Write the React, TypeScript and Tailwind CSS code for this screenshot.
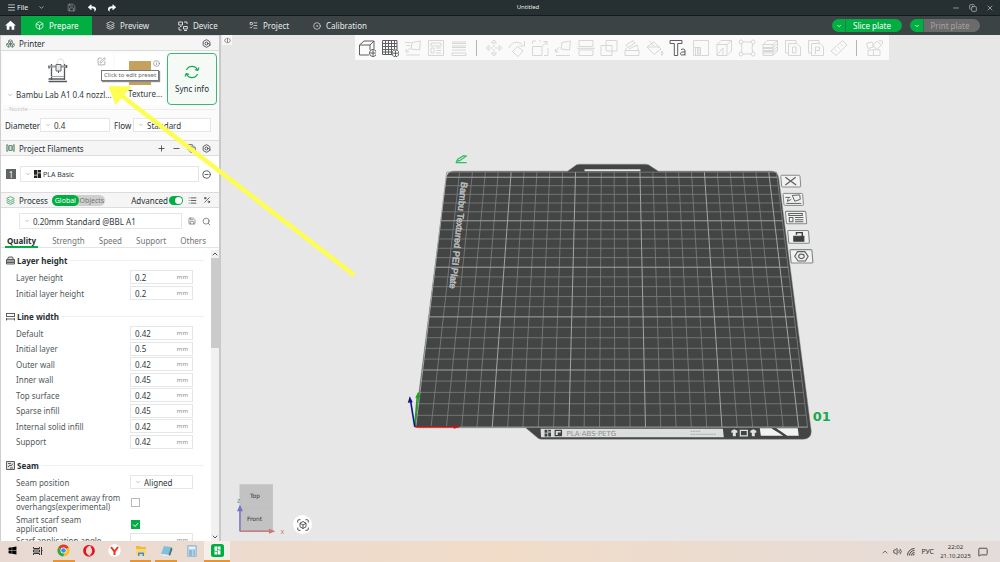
import React, { useState } from "react";
import {
  Bolt, Box, Boxes, ChevronDown, ChevronUp, CircleMinus, Copy, Info, Layers, List, Menu, MessageSquare,
  Minus, Plus, Save, Search, SquarePen, Volume2, X, ListTodo, CircleDot, Percent,
} from "lucide-react";
import { FaReply, FaShare, FaOpera, FaWindows } from "react-icons/fa";
import { MdHome } from "react-icons/md";

/* ---------- build plate projection ---------- */
const K = 0.00736;
const project = (u: number, t: number): [number, number] => {
  const d = 1 + K * t;
  return [610.5 + (415 + 15.33 * u - 610.5) / d, -1183 + 1610.3 / d];
};
const SIZE = 25.6;
const line = (a: [number, number], b: [number, number]) =>
  `M${a[0].toFixed(1)} ${a[1].toFixed(1)}L${b[0].toFixed(1)} ${b[1].toFixed(1)}`;
const steps = Array.from({ length: 26 }, (_, i) => i);
const gridPath = (bold: boolean) =>
  steps
    .filter((i) => (i % 5 === 0) === bold)
    .map((i) => line(project(i, 0), project(i, SIZE)) + line(project(0, i), project(SIZE, i)))
    .join("");

function PlateButton({ x, y, s, children }: { x: number; y: number; s: number; children: React.ReactNode }) {
  return (
    <g transform={`translate(${x} ${y}) scale(${s})`} stroke="#5f6262" fill="none" strokeWidth="1">
      <path d="M-9.5-6H8.5Q9.3-6 9.4-5L10.2 5Q10.3 6 9.4 6H-8.4Q-9.2 6-9.3 5L-10.2-5Q-10.3-6-9.5-6Z" fill="#f1f1f1" stroke="#858888" />
      {children}
    </g>
  );
}

function Scene() {
  return (
    <svg className="absolute inset-0 h-full w-full" viewBox="220 35 780 506" preserveAspectRatio="xMidYMid meet" fontFamily="'Noto Sans', sans-serif">
      {/* plate body */}
      <path
        d="M414 425L445.500 178Q446.500 171 453 171H567L576 164.500Q577 164 579 164H645Q647 164 648 164.500L658 171H771Q777.500 171 778.500 178L811 431Q811.500 439 803 439.500H541Q539 439.500 537.500 438.500L525 428H418Q414 428 414 425Z"
        fill="#434544" stroke="#8d8f8e" strokeWidth="0.500"
      />
      <path d="M584 169H640V171H584Z" fill="#e4e4e4" />
      <path d={gridPath(false) + line(project(0, SIZE), project(SIZE, SIZE)) + line(project(SIZE, 0), project(SIZE, SIZE))} stroke="#7e8180" strokeWidth="0.800" fill="none" />
      <path d={gridPath(true)} stroke="#a3a5a4" strokeWidth="1" fill="none" />
      <text transform="translate(460.500 181.500) rotate(96.300)" fontSize="9.200" fill="#bcbebd" stroke="#bcbebd" strokeWidth="0.500" fontFamily="'Liberation Sans', sans-serif">
        Bambu Textured PEI Plate
      </text>
      {/* front label strip */}
      <path d="M540 429H722.500L723.500 437.500H540.500Z" fill="#dcdddd" />
      <g fill="#3f4241">
        <path d="M544 430h2.800v3h-2.800zM547.600 430h2.800v1.800h-2.800zM544 433.800h2.800v3h-2.800zM547.600 432.600h2.800v4.200h-2.800z" />
        <path d="M554 430h7.500v6.500h-7.500zM555.200 431.200v4h2v-2.400h3v-1.600z" fillRule="evenodd" />
      </g>
      <text x="566" y="436" fontSize="7" fill="#8e9090" fontFamily="'DejaVu Sans', sans-serif">PLA·ABS·PETG</text>
      <path d="M690 431.500h10M690 434.500h26" stroke="#a0a2a2" strokeWidth="0.800" strokeDasharray="2 0.600" />
      <path d="M731 431l3-1.500 3 1.500v2h-1.500v3.500h-3V433H731zM750 431l3-1.500 3 1.500v2h-1.500v3.500h-3V433H750z" fill="#dfe0e0" />
      <path d="M740 430.500h7v5.500h-7z" fill="none" stroke="#dfe0e0" strokeWidth="1.200" />
      <path d="M759.500 428.500H771L783 436H760.500ZM776 428.500H797.500L798.500 436H787Z" fill="#f2f2f2" />
      {/* origin axes */}
      <path d="M414 427L416.500 397" stroke="#17a317" strokeWidth="1.600" />
      <path d="M417.500 392L420 398H414.500Z" fill="#17a317" />
      <path d="M414 427L410 402" stroke="#12128c" strokeWidth="1.600" />
      <path d="M409 396.500L412 402.500L407 403Z" fill="#12128c" />
      <path d="M414 427H455" stroke="#c01414" strokeWidth="1.600" />
      <path d="M453 425L460 427L453 429Z" fill="#c01414" />
      {/* rename mark and plate number */}
      <path d="M456 161L457 159L463 155.500L465.500 156L459 160.500ZM455 162.500H466" stroke="#2fbd66" strokeWidth="1.200" fill="none" />
      <text x="812.500" y="421" fontSize="13" fontWeight="bold" fill="#19a94b" fontFamily="'DejaVu Sans', sans-serif">01</text>
      {/* plate tools */}
      <PlateButton x={790.500} y={181} s={0.980}><path d="M-5.500-4L5.500 4M5-4L-5.500 4" strokeWidth="1.400" /></PlateButton>
      <PlateButton x={793} y={199.300} s={1}><path d="M-1-4L6.500-4.500 7 0 1.500 1.800ZM-8-2H-3M-7 4H8M-5-1L-6 2L-2 0" /></PlateButton>
      <PlateButton x={795.800} y={217.500} s={1.040}><path d="M-7-4H6V-2H-7ZM-6.500 0H-3V4H-6.500ZM-1 0H7M-1 2H7M-1 4H7" /></PlateButton>
      <PlateButton x={798.300} y={236.800} s={1.060}><path d="M-4.500-.5H5V4H-4.500Z" fill="#3c3e3e" stroke="#3c3e3e" /><path d="M-2-2V-4H3.500V0" stroke="#3c3e3e" strokeWidth="1.300" /></PlateButton>
      <PlateButton x={801.200} y={256.300} s={1.120}><path d="M-3.500-4.200H3L6 0L3.500 4.200H-3L-6 0Z" /><ellipse rx="2.500" ry="2" /></PlateButton>
      {/* view cube */}
      <path d="M238.500 484.500H272V532H238.500Z" fill="#c2c2c2" />
      <path d="M238.500 508H272" stroke="#bcbcbc" strokeWidth="0.500" />
      <text x="249" y="498.300" fontSize="6" fill="#333" fontFamily="'DejaVu Sans', sans-serif">Top</text>
      <text x="246" y="521.500" fontSize="6" fill="#333" fontFamily="'DejaVu Sans', sans-serif">Front</text>
      <path d="M239 531.500V510" stroke="#7a72c4" strokeWidth="1.500" />
      <path d="M239 505L242 511.500H236Z" fill="#7a72c4" />
      <path d="M239 531.500H270" stroke="#c87878" strokeWidth="1.500" />
      <path d="M274.500 531.500L268 529V534Z" fill="#c87878" />
      <text x="236" y="503" fontSize="7" fill="#5da08c">z</text>
      <text x="279.500" y="534" fontSize="7" fill="#d08080">x</text>
    </svg>
  );
}

/* ---------- canvas toolbar ---------- */
const tools: { label: string; d: string; dark?: boolean; gap?: boolean }[] = [
  { label: "Add", dark: true, d: "M1.500 6L6 2H16L12 6ZM1.500 6V16H11M12 6V11M16 2V10M15 11.200V16.800M12.200 14H17.800M15 10.500a3.500 3.500 0 1 0 .01 0" },
  { label: "Add plate", dark: true, d: "M1.500 1.500H16V11M1.500 1.500V15.500H11M1.500 4.500H16M1.500 7.500H16M1.500 10.500H12.500M1.500 13H11M4.500 1.500V15.500M7.500 1.500V15.500M10.500 1.500V15.500M13.500 1.500V10.500M14.500 11.500V17M11.500 14.200H17.500M14.500 10.800a3.500 3.500 0 1 0 .01 0" },
  { label: "Auto orient", d: "M8 3.500L16.500 2 15.500 11 7 10ZM1 3.500H7M2 6.500H6M6 9L2 13M2 10v3h3M2 16H16" },
  { label: "Arrange", d: "M1.500 1.500H16.500V16.500H1.500ZM4 4H14V7H4ZM4 9H7V14H4ZM9 9H14M9 11.500H14M9 14H14" },
  { label: "Layer height", d: "M2 3H16M2 4.500H16M2 7H16M2 8.500H16M2 11H16M2 14H16V16.500H2Z" },
  { label: "Move", gap: true, d: "M9 1L11.500 4H6.500ZM9 17L11.500 14H6.500ZM1 9L4 6.500V11.500ZM17 9L14 6.500V11.500ZM9 5.500V8M9 10V12.500M5.500 9H8M10 9H12.500" },
  { label: "Rotate", d: "M1 9A8 7 0 0 1 14 5M16.500 2V7H11.500M9.500 7.500L15 12 10 17.500 4.500 12.500Z" },
  { label: "Scale", d: "M1.500 7.500H11V16.500H1.500ZM1.500 5V2H5M8 2H10M17 9V16.500H13M11 7.500L16 2.500M12.500 2.500H16V6" },
  { label: "Lay flat", d: "M8 3.500L16.500 2 15.500 11 7 10ZM5 8L1.500 13M1.500 10v3h3M2 16.500H16" },
  { label: "Cut", d: "M2 1.500H16V7.500H2ZM2 11H16V16.500H2ZM0 9.300H18" },
  { label: "Boolean", d: "M1 6.500H12V16.500H1ZM6 1.500H17V12H6Z" },
  { label: "Supports", d: "M2 11.500H16V16.500H2ZM2 11.500L4 8.500M16 11.500L14.500 9M3 6L10 1.500 12 4 5 8.500ZM6 10L14 6L15 8.500" },
  { label: "Paint", d: "M3 1.500L8 7M1 8L8 3 15 10 8 15.500ZM1 8H14M16 12q-2 3 0 4.500q2-1.500 0-4.500" },
  { label: "Text", dark: true, d: "M1 1.500H13V4.500H8.700V16.500H5.300V4.500H1ZM12 10.500q4-1.500 4 1.500v4.500M16 13q-4.500-.5-4.500 1.700t4.500.8" },
  { label: "Seam", d: "M1.500 1.500H16.500V16.500H9M1.500 1.500V8M1.500 8.500H8.500V16.500H1.500ZM3.500 8.500V16.500M5.500 8.500V16.500M7 8.500V16.500" },
  { label: "Simplify", d: "M2 5.500L6 1.500H16.500L12 5.500ZM2 5.500V16.500H12V5.500M16.500 1.500V12L12 16.500M8 9V16M2 16L8 9" },
  { label: "Measure points", d: "M4.500 3H13.500M4.500 15H13.500M3 4.500Q5 9 3 13.500M15 4.500Q13 9 15 13.500M3 1a2 2 0 1 0 .01 0M15 1a2 2 0 1 0 .01 0M3 13a2 2 0 1 0 .01 0M15 13a2 2 0 1 0 .01 0" },
  { label: "Height range", d: "M2 5.500L6 1.500H16.500L12 5.500ZM2 5.500V16.500H12V5.500M16.500 1.500V12L12 16.500M2 8.500H12L16.500 4.500M2 11.500H12L16.500 7.500M2 14H12L16.500 10M2 9.500H12M2 12.500H12" },
  { label: "Outline", d: "M1.500 1.500H12V4M1.500 1.500V14H4M4.500 4.500H13L16.500 8V16.500H4.500ZM8.500 8H12V14H8.500Z" },
  { label: "Profile", d: "M1.500 1.500H12V4M1.500 1.500V14H4M4.500 4.500H13L16.500 8V16.500H4.500ZM8.500 15V8H12.500V11.500H8.500" },
  { label: "Measure", d: "M1 12L12.500 1.500 17 6 6 16.500ZM5 10.500L6.500 12M8 8L9.500 9.500M11 5.500L12.500 7" },
  { label: "Assembly", gap: true, d: "M1.500 4.500L7 3 8.500 8 3 9.500ZM12 2L16.500 6 12 10.500 8 6.500ZM3 11H8.500V16.500H3ZM8.500 10.500L15 11V16.500H8.500ZM14 1.500L17.500 2V5" },
];

function CanvasToolbar() {
  return (
    <div className="ml-[123px] flex h-[25px] w-fit items-center bg-[#fafafa] pr-1">
      {tools.map((t) => (
        <React.Fragment key={t.label}>
          {t.gap && (
            <span className="flex w-3 justify-center"><span className="h-4 w-px bg-[#b4b4b4]" /></span>
          )}
          <button aria-label={t.label} className="flex w-[23px] justify-center">
            <svg viewBox="0 0 18 18" className="size-[18px]" fill="none" stroke={t.dark ? "#5c5f5f" : "#d6d7d7"} strokeWidth="1"><path d={t.d} /></svg>
          </button>
        </React.Fragment>
      ))}
    </div>
  );
}

/* ---------- sidebar ---------- */
function Picker({ id, value, className = "", children }: { id: string; value: string; className?: string; children?: React.ReactNode }) {
  return (
    <span className={`flex min-w-0 items-center gap-[3px] bg-white pl-1 ${className}`}>
      <ChevronDown className="size-[6px] shrink-0 text-[#8c8c8c]" />
      {children}
      <select id={id} aria-label={id} className="min-w-0 flex-1 appearance-none overflow-hidden bg-transparent text-[#303a3c] outline-none">
        <option>{value}</option>
      </select>
    </span>
  );
}

function SectionBar({ icon, title, children }: { icon: React.ReactNode; title: string; children: React.ReactNode }) {
  return (
    <div className="flex h-4 items-center border-y border-[#dcdcdc] bg-[#f5f5f5] pr-2 pl-[5px]">
      <span className="flex w-[13px] text-[#5c7a68]">{icon}</span>
      <h2 className="text-[8px]">{title}</h2>
      {children}
    </div>
  );
}

function GroupTitle({ title, icon }: { title: string; icon: string }) {
  return (
    <div className="flex h-4 items-center gap-[2px] pr-[7px] pl-[5px]">
      <svg viewBox="0 0 9 9" className="size-[9px]" stroke="#4a4f50" fill="#dfe1e1" strokeWidth="0.900"><path d={icon} /></svg>
      <h3 className="text-[8px] font-bold">{title}</h3>
      <span className="h-px flex-1 bg-[#f0f0f0]" />
    </div>
  );
}

function NumberRow({ label, value }: { label: string; value: string }) {
  const [v, setV] = useState(value);
  const id = "p-" + label.toLowerCase().replace(/ /g, "-");
  return (
    <div className="flex h-[14px] items-center pr-[18px] pl-[15px]">
      <label htmlFor={id} className="flex-1">{label}</label>
      <span className="flex h-[14px] w-[63px] items-center border border-[#e6e6e6] bg-white pr-1 pl-1">
        <input id={id} value={v} onChange={(e) => setV(e.target.value)} className="w-0 flex-1 bg-transparent text-[#303a3c] outline-none" />
        <span className="pt-px text-[6px] text-[#8a8a8a]">mm</span>
      </span>
    </div>
  );
}

function CheckRow({ id, first, second, on }: { id: string; first: string; second: string; on: boolean }) {
  const [checked, setChecked] = useState(on);
  return (
    <div className="mt-1 flex h-[18px] items-center pl-[15px]">
      <label htmlFor={id} className="w-[115px] leading-[9px]">{first}<br />{second}</label>
      <span className="grid place-items-center">
        <input id={id} type="checkbox" checked={checked} onChange={(e) => setChecked(e.target.checked)}
          className="size-[9px] appearance-none border border-[#b9b9b9] bg-white [grid-area:1/1] checked:border-[#00ae42] checked:bg-[#00ae42]" />
        {checked && (
          <svg viewBox="0 0 9 9" className="pointer-events-none size-[9px] [grid-area:1/1]" stroke="#fff" fill="none"><path d="M2 4.500L4 6.500L7.200 3" /></svg>
        )}
      </span>
    </div>
  );
}

const widths: [string, string][] = [
  ["Default", "0.42"], ["Initial layer", "0.5"], ["Outer wall", "0.42"], ["Inner wall", "0.45"],
  ["Top surface", "0.42"], ["Sparse infill", "0.45"], ["Internal solid infill", "0.42"], ["Support", "0.42"],
];

function PrinterPicture() {
  return (
    <svg viewBox="0 0 22 26" className="h-[26px] w-[22px]" fill="none" stroke="#55595a">
      <path d="M10 7Q10 1 13.500 1T17 6" stroke="#c5c8c8" strokeWidth="0.700" />
      <path d="M4.500 6V22M17.500 6V22" strokeWidth="1.300" />
      <path d="M3 8.500H19" stroke="#9a9e9e" strokeWidth="2" />
      <path d="M9 6.500H14V13H9Z" fill="#e5e7e7" stroke="#6a6e70" />
      <path d="M11.500 13V15" />
      <path d="M4 18.500H17" stroke="#a5a9aa" />
      <path d="M1.500 21H18M1.500 23.500H20" strokeWidth="1.500" />
      <path d="M2 7.500v3M19.500 7v3" strokeWidth="1.500" />
    </svg>
  );
}

function Sidebar() {
  const [advanced, setAdvanced] = useState(true);
  return (
    <aside className="flex w-[221px] shrink-0 flex-col overflow-hidden border-r-2 border-l border-r-[#c9c9c9] border-l-[#cfcfcf] bg-white">
      <SectionBar title="Printer" icon={<Boxes className="size-[9px]" />}>
        <button aria-label="Printer settings" className="ml-auto"><Bolt className="size-[9px]" /></button>
      </SectionBar>
      <div className="flex flex-col bg-[#fbfbfb] px-[2px] pt-[2px]">
        <div className="flex h-[52px] gap-[2px]">
          <div className="relative flex w-[110px] flex-col items-center justify-between bg-white pt-[5px] pb-[5px]">
            <PrinterPicture />
            <Picker id="Printer preset" value="Bambu Lab A1 0.4 nozzl..." className="w-full" />
            <button aria-label="Edit preset" className="absolute top-1 right-[7px] text-[#777]"><SquarePen className="size-[9px]" strokeWidth={1.500} /></button>
            <div role="tooltip" className="absolute top-[17px] left-[98px] z-10 flex h-[11px] items-center border border-[#777] bg-white px-[2px] text-[6px] whitespace-nowrap text-[#666] shadow-[1px_1px_1px_#888]">
              Click to edit preset
            </div>
          </div>
          <div className="relative flex w-[50px] flex-col items-center justify-between bg-white pt-2 pb-[6px]">
            <span className="h-6 w-[22px] bg-[#c6a05f]" />
            <Picker id="Plate type" value="Texture..." className="w-full" />
            <Info className="absolute top-[7px] right-[5px] size-[7px] text-[#777]" />
          </div>
          <button className="flex flex-1 flex-col items-center justify-center gap-[3px] rounded-[4px] border border-[#3fb574] bg-[#f6faf7]">
            <svg viewBox="0 0 16 16" className="size-4" fill="none" stroke="#10ab4c" strokeWidth="1.200">
              <path d="M2.500 6A6 6 0 0 1 13.500 6M15 3.500L13.700 6.500L10.800 5.500M13.500 10A6 6 0 0 1 2.500 10M1 12.500L2.300 9.500L5.200 10.500" />
            </svg>
            <span className="text-[8px] leading-[12px]">Sync info</span>
          </button>
        </div>
        <fieldset className="h-[35px] border-t border-[#eee] pt-px pr-1 pl-[2px]">
          <legend className="ml-1 text-[6px] leading-[8px] text-[#c4c4c4]">Nozzle</legend>
          <div className="flex h-[22px] items-center">
            <label htmlFor="Diameter" className="w-[35px]">Diameter</label>
            <Picker id="Diameter" value="0.4" className="h-[14px] w-[70px] border border-[#e6e6e6]" />
            <label htmlFor="Flow" className="w-[23px] pl-1">Flow</label>
            <Picker id="Flow" value="Standard" className="h-[14px] w-[78px] border border-[#e6e6e6]" />
          </div>
        </fieldset>
      </div>

      <SectionBar
        title="Project Filaments"
        icon={
          <svg viewBox="0 0 9 8" className="h-2 w-[9px]" fill="#bfe3cd" stroke="#6d8576" strokeWidth="0.900"><path d="M3 1.500H6V6.500H3ZM.8 .5Q2.400 .5 2.400 4T.8 7.500ZM8.200 .5Q6.600 .5 6.600 4T8.200 7.500Z" /></svg>
        }
      >
        <div className="ml-auto flex items-center gap-[6px]">
          <button aria-label="Add filament"><Plus className="size-[9px]" /></button>
          <button aria-label="Remove filament"><Minus className="size-[9px]" /></button>
          <button aria-label="Sync filaments"><Copy className="size-[9px]" /></button>
          <button aria-label="Filament settings"><Bolt className="size-[9px]" /></button>
        </div>
      </SectionBar>
      <div className="flex h-9 items-center pr-2 pl-[5px]">
        <span className="flex h-[10px] w-[10px] items-center justify-center bg-[#5f6364] text-white">1</span>
        <Picker id="Filament 1" value="PLA Basic" className="ml-1 h-4 flex-1 border border-[#e6e6e6] text-[7px]">
          <svg viewBox="0 0 7 8" className="-mr-px h-2 w-[7px]" fill="#222"><path d="M0 0H3.200V4.800H0ZM3.800 0H7V2.600H3.800ZM3.800 3.200H7V8H3.800ZM0 5.400H3.200V8H0Z" /></svg>
        </Picker>
        <button aria-label="Filament menu" className="ml-[3px]"><CircleMinus className="size-[9px]" /></button>
      </div>

      <SectionBar title="Process" icon={<Layers className="size-[9px] text-[#2e9d5a]" />}>
        <div className="ml-1 flex h-[11px] items-center rounded-full bg-[#cfcfcf] text-[7px]">
          <button className="flex h-full w-[27px] items-center justify-center rounded-full bg-[#00ae42] text-white">Global</button>
          <button className="w-[26px] text-center text-[#777]">Objects</button>
        </div>
        <label htmlFor="advanced" className="ml-auto">Advanced</label>
        <span className="ml-px grid items-center">
          <input id="advanced" type="checkbox" role="switch" checked={advanced} onChange={(e) => setAdvanced(e.target.checked)}
            className="h-[9px] w-[14px] appearance-none rounded-full bg-[#bbb] [grid-area:1/1] checked:bg-[#00ae42]" />
          <span className={`pointer-events-none mx-px size-[7px] rounded-full bg-white [grid-area:1/1] ${advanced ? "justify-self-end" : ""}`} />
        </span>
        <button aria-label="Parameter list" className="ml-[5px]"><List className="size-[9px]" /></button>
        <button aria-label="Compare presets" className="ml-[6px]"><Percent className="size-[8px]" /></button>
      </SectionBar>
      <div className="flex h-[26px] items-center pr-2 pl-[18px]">
        <Picker id="Process preset" value="0.20mm Standard @BBL A1" className="h-4 flex-1 border border-[#e6e6e6]" />
        <button aria-label="Save preset" className="ml-[6px] text-[#666]"><Save className="size-[8px]" /></button>
        <button aria-label="Search" className="ml-[6px] text-[#666]"><Search className="size-[9px]" /></button>
      </div>
      <nav className="flex h-[14px] items-stretch justify-between border-b border-[#e4e4e4] pr-[13px] pl-[4px] text-[8px] text-[#707576]">
        <button className="-mb-px border-b-2 border-[#00ae42] px-[2px] font-bold text-[#263033]">Quality</button>
        <button>Strength</button>
        <button>Speed</button>
        <button>Support</button>
        <button>Others</button>
      </nav>

      <div className="flex min-h-0 flex-1">
        <div className="min-w-0 flex-1 overflow-hidden pt-1 text-[#50595b]">
          <section className="text-[#263033]">
            <GroupTitle title="Layer height" icon="M1.500 3.500L2.500 1H6.500L7.500 3.500M.5 3.500H8.500V8H.5ZM.5 5H8.500M.5 6.500H8.500" />
            <div className="mt-[2px] flex flex-col gap-[2px] text-[#50595b]">
              <NumberRow label="Layer height" value="0.2" />
              <NumberRow label="Initial layer height" value="0.2" />
            </div>
          </section>
          <section className="mt-2 text-[#263033]">
            <GroupTitle title="Line width" icon="M0 1.500H9M.5 1.500V4M8.500 1.500V4M0 4.500H9M0 7H9M.5 6V8.500M8.500 6V8.500" />
            <div className="mt-[2px] flex h-[123px] flex-col justify-between text-[#50595b]">
              {widths.map(([l, v]) => <NumberRow key={l} label={l} value={v} />)}
            </div>
          </section>
          <section className="mt-2 text-[#263033]">
            <GroupTitle title="Seam" icon="M.5 .5H8.500V8.500H.5ZM2 6L4 4L5 5L7 2.500M2 2.500H5M4 7H7" />
            <div className="mt-[2px] text-[#50595b]">
              <div className="flex h-[14px] items-center pr-[18px] pl-[15px]">
                <label htmlFor="Seam position" className="flex-1">Seam position</label>
                <Picker id="Seam position" value="Aligned" className="h-[14px] w-[63px] border border-[#e6e6e6]" />
              </div>
              <CheckRow id="seam-away" first="Seam placement away from" second="overhangs(experimental)" on={false} />
              <CheckRow id="smart-scarf" first="Smart scarf seam" second="application" on />
              <NumberRow label="Scarf application angle" value="" />
            </div>
          </section>
        </div>
        <div className="mt-[2px] flex w-2 flex-col items-center bg-[#f1f1f1] text-[#555]">
          <ChevronUp className="size-[8px]" strokeWidth={3} />
          <span className="h-[90px] w-full bg-[#cbcbcb]" />
          <ChevronDown className="mt-auto size-[8px]" strokeWidth={3} />
        </div>
      </div>
    </aside>
  );
}

/* ---------- window chrome ---------- */
function DeviceIcon() {
  return (
    <svg viewBox="0 0 10 10" className="size-[10px]" fill="none" stroke="currentColor" strokeWidth="0.900">
      <path d="M.7 1H4.500V4H.7ZM6 1H9V3M1 6V9H3.500M5.500 5.500H9.300V8H5.500ZM6 9.500H9M2 5.500H3.500" />
    </svg>
  );
}

function SplitButton({ label, active }: { label: string; active: boolean }) {
  return (
    <div className="flex h-[13px] overflow-hidden rounded-full text-[8px]">
      <button aria-label={label + " options"} className="flex w-[13px] items-center justify-center bg-[#00ae42] text-white"><ChevronDown className="size-[6px]" strokeWidth={3} /></button>
      <button className={`w-[57px] border-l border-[#2c7a48] pr-1 text-center ${active ? "bg-[#00ae42] text-white" : "bg-[#6b6b6b] text-[#a3a3a3]"}`}>{label}</button>
    </div>
  );
}

function TopBars() {
  return (
    <header className="shrink-0 text-[#e8eaea]">
      <div className="flex h-4 items-center border-b border-[#151b1d] bg-[#262f31]">
        <div className="flex w-[126px] items-center">
          <button className="ml-[7px] flex items-center gap-px text-[7px]"><Menu className="size-[9px]" />File</button>
          <button aria-label="File menu" className="ml-[10px]"><ChevronDown className="size-[7px]" /></button>
          <button aria-label="Save" className="ml-[22px] text-[#8b9192]"><Save className="size-[9px]" /></button>
          <button aria-label="Undo" className="ml-3 text-white"><FaReply className="size-[8px]" /></button>
          <button aria-label="Redo" className="ml-3 text-white"><FaShare className="size-[8px]" /></button>
        </div>
        <h1 className="flex-1 text-center text-[6px]">Untitled</h1>
        <div className="flex w-[70px] items-center justify-end gap-[9px] pr-[6px] text-[#c9cccc]">
          <button aria-label="Minimize"><Minus className="size-[8px]" /></button>
          <button aria-label="Restore"><Copy className="size-[8px]" /></button>
          <button aria-label="Close"><X className="size-[8px]" /></button>
        </div>
      </div>
      <nav className="flex h-[19px] items-center bg-[#3b4345] text-[8px]">
        <button aria-label="Home" className="flex w-[21px] justify-center text-white"><MdHome className="size-[13px]" /></button>
        <button className="flex h-full w-[71px] items-center gap-[5px] bg-[#00ae42] pl-[14px] text-white"><Box className="size-[9px]" />Prepare</button>
        <button className="flex w-[72px] items-center gap-[5px] pl-[14px]"><Layers className="size-[9px]" />Preview</button>
        <button className="flex w-[71px] items-center gap-[5px] pl-[14px]"><DeviceIcon />Device</button>
        <button className="flex w-[63px] items-center gap-[5px] pl-[14px]"><ListTodo className="size-[9px]" />Project</button>
        <button className="flex items-center gap-[5px] pl-[15px]"><CircleDot className="size-[8px]" />Calibration</button>
        <div className="ml-auto flex gap-2 pr-5">
          <SplitButton label="Slice plate" active />
          <SplitButton label="Print plate" active={false} />
        </div>
      </nav>
    </header>
  );
}

/* ---------- desktop taskbar ---------- */
const apps: { name: string; open?: boolean; active?: boolean; icon: React.ReactNode }[] = [
  { name: "Start", icon: <FaWindows className="size-[9px] text-black" /> },
  { name: "Task view", icon: <svg viewBox="0 0 10 10" className="size-[10px]" fill="none" stroke="#333"><path d="M.5 1V2.500H6.500V1M.5 9V7.500H6.500V9M.5 4H6.500V6H.5ZM8.500 1V9M8 4.500H9.500" /></svg> },
  { name: "Chrome", open: true, icon: (
    <svg viewBox="0 0 14 14" className="size-[13px]"><circle cx="7" cy="7" r="6.500" fill="#fbc116" /><path d="M7 7L1.400 3.700A6.500 6.500 0 0 1 12.600 3.800Z" fill="#e33b2e" /><path d="M7 7L1.400 3.700A6.500 6.500 0 0 0 6.500 13.500L9 8Z" fill="#2da94f" /><circle cx="7" cy="7" r="3.200" fill="#fff" /><circle cx="7" cy="7" r="2.500" fill="#4688f1" /></svg>
  ) },
  { name: "Opera", icon: <FaOpera className="size-[12px] text-[#e0141e]" /> },
  { name: "Yandex", icon: <svg viewBox="0 0 13 13" className="size-[13px]"><circle cx="6.500" cy="6.500" r="6.200" fill="#fff" /><path d="M3 3L6.500 7.500L10 3M6.500 7V11" stroke="#f0301c" strokeWidth="2" fill="none" /></svg> },
  { name: "Explorer", open: true, icon: <svg viewBox="0 0 12 12" className="size-[12px]"><path d="M1 1H5L6 2H11V10H1Z" fill="#f0b93a" /><path d="M1 4H11V10H1Z" fill="#fbd774" /><path d="M3 11V7.500H9V11H7.500V9H4.500V11Z" fill="#3d8fd6" /></svg> },
  { name: "Notepad", open: true, icon: <svg viewBox="0 0 13 12" className="h-[12px] w-[13px]"><path d="M4 1L11 2L8.500 10L1 9Z" fill="#7fc0de" /><path d="M11 2L12.500 4L10 11L8.500 10Z" fill="#48727f" /><path d="M1 9L8.500 10L10 11L3 10.800Z" fill="#f0f0f0" /></svg> },
  { name: "Calculator", icon: <svg viewBox="0 0 10 12" className="h-[12px] w-[10px]"><path d="M.5 .5H9.500V11.500H.5Z" fill="#b5d3e8" stroke="#9fc0d8" /><path d="M2 2H8V4H2Z" fill="#e9f3fa" /><path d="M2 6H5M2 8H5M2 10H5M6.500 6H8M6.500 8H8M6.500 10H8" stroke="#6f9cc0" /></svg> },
  { name: "Bambu Studio", open: true, active: true, icon: <svg viewBox="0 0 13 13" className="size-[13px]"><rect width="13" height="13" rx="2.500" fill="#00ae42" /><path d="M3.500 2.500H6.200V7.500L3.500 6.500ZM6.800 2.500H9.500V6L6.800 5ZM6.800 5.800L9.500 6.800V10.500H6.800ZM3.500 7.200L6.200 8.200V10.500H3.500Z" fill="#fff" /></svg> },
];

function Taskbar() {
  return (
    <footer className="flex h-[21px] shrink-0 items-center bg-linear-to-r from-[#e8dad3] via-[#f1dcc8] to-[#e4dcda]">
      <div className="grid h-full w-[230px] grid-cols-9">
        {apps.map((a) => (
          <button key={a.name} aria-label={a.name} className={`flex items-center justify-center border-b-2 ${a.active ? "bg-[#f5eee9]" : "mx-[2px]"} ${a.open ? "border-[#e8952f]" : "border-transparent"}`}>
            {a.icon}
          </button>
        ))}
      </div>
      <div className="ml-auto flex items-center text-[#333]">
        <ChevronUp className="size-[8px]" />
        <Volume2 className="ml-1 size-[9px]" />
        <svg viewBox="0 0 8 8" className="ml-[5px] size-[8px]" fill="none" stroke="#333" strokeWidth="0.900"><path d="M.5 7.500A7 7 0 0 1 7.500 .5M2.500 7.500A5 5 0 0 1 7.500 2.500M4.500 7.500A3 3 0 0 1 7.500 4.500M6.200 7.500A1.300 1.300 0 0 1 7.500 6.200" /></svg>
        <span className="ml-[6px] text-[7px]">РУС</span>
        <div className="ml-[6px] w-[31px] text-center text-[6px] leading-[9px] whitespace-nowrap"><div>22:02</div><div>21.10.2025</div></div>
        <MessageSquare className="mr-3 ml-[7px] size-[10px]" />
      </div>
    </footer>
  );
}

export default function App() {
  return (
    <div className="relative flex h-screen flex-col overflow-hidden font-['Noto_Sans',sans-serif] text-[8px] leading-[11px] text-[#263033]">
      <TopBars />
      <main className="flex min-h-0 flex-1">
        <Sidebar />
        <div className="relative min-w-0 flex-1 bg-[#e7e7e7]">
          <Scene />
          <div className="relative flex items-start">
            <button aria-label="Collapse sidebar" className="ml-px flex size-[10px] items-center justify-center bg-[#f7f7f7]">
              <svg viewBox="0 0 8 8" className="size-[7px]" fill="none" stroke="#777"><path d="M3 1.500Q.8 2.500.8 4T3 6.500M5 1.500Q7.200 2.500 7.200 4T5 6.500M4 1V7" /></svg>
            </button>
            <CanvasToolbar />
          </div>
          <button aria-label="Fit view" className="absolute bottom-[7px] left-[72px] flex size-[19px] items-center justify-center rounded-full bg-white text-[#444]">
            <svg viewBox="0 0 12 12" className="size-[12px]" fill="none" stroke="currentColor" strokeWidth="0.900">
              <path d="M.7 3.500V2Q.7 .7 2 .7H3.500M8.500 .7H10Q11.300 .7 11.300 2V3.500M11.300 8.500V10Q11.300 11.300 10 11.300H8.500M3.500 11.300H2Q.7 11.300 .7 10V8.500M6 2.500L9 4.200V7.800L6 9.500L3 7.800V4.200ZM3 4.200L6 6L9 4.200M6 6V9.500" />
            </svg>
          </button>
        </div>
      </main>
      <Taskbar />
      <svg className="pointer-events-none absolute top-0 left-0 h-[300px] w-[400px]" viewBox="0 0 400 300">
        <path d="M354 275L122 96" stroke="#fdfd52" strokeWidth="4.500" />
        <path d="M108.500 86L132 86.500L115.500 105Z" fill="#fdfd52" />
      </svg>
    </div>
  );
}
